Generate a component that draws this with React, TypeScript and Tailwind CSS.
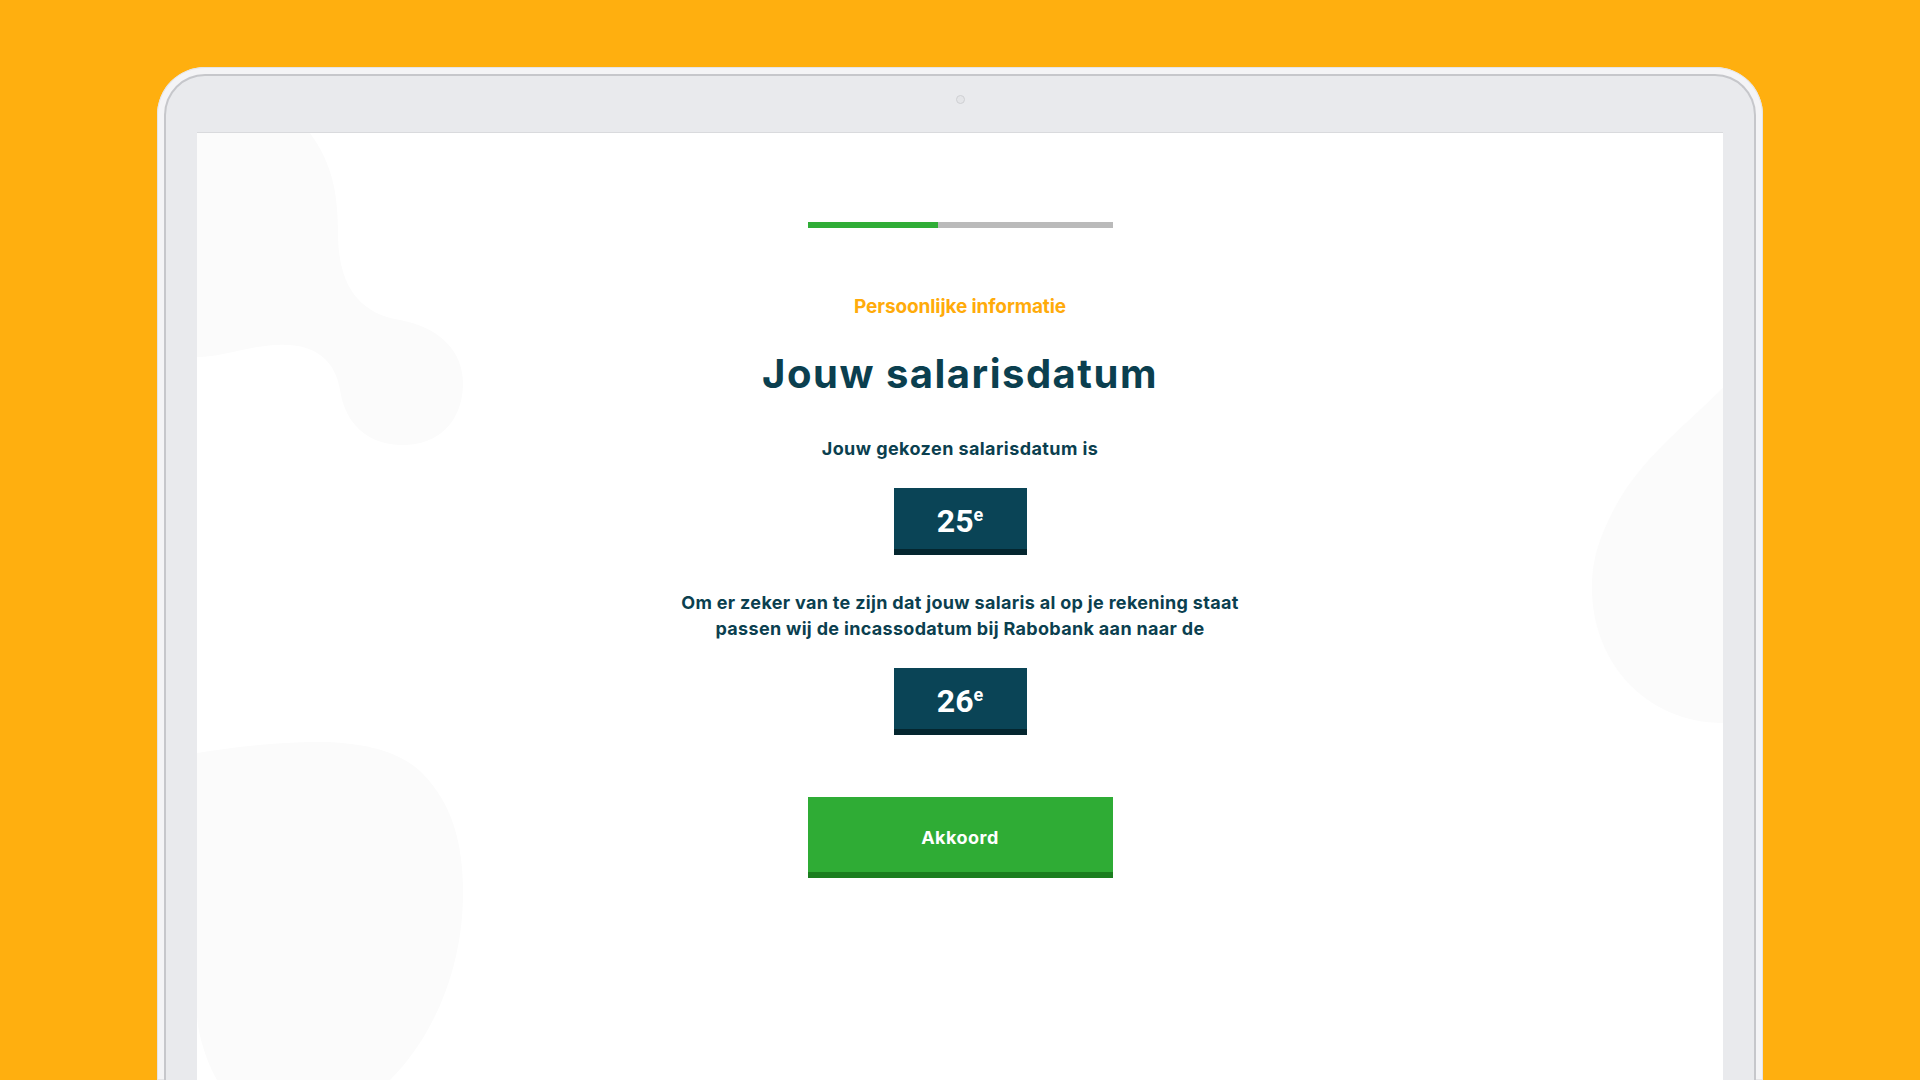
import React from "react";

function Blobs() {
  return (
    <svg
      className="absolute inset-0 h-full w-full"
      viewBox="0 0 1526 947"
      preserveAspectRatio="none"
      aria-hidden="true"
    >
      <path
        fill="#fbfbfb"
        d="M0,0 L113,0 C135,30 141,60 141,100 C141,150 160,180 203,187 C245,195 266,220 266,250 C266,290 240,312 206,312 C170,312 148,290 143,257 C138,225 115,210 80,212 C50,213 25,224 0,224 Z"
      />
      <path
        fill="#fbfbfb"
        d="M1526,255 C1480,300 1440,330 1415,380 C1400,410 1395,430 1395,455 C1395,530 1450,590 1526,590 Z"
      />
      <path
        fill="#fbfbfb"
        d="M0,620 C40,614 80,609 120,609 C170,609 205,620 225,640 C255,670 266,710 266,760 C266,830 240,900 193,947 L20,947 C10,930 0,900 0,880 Z"
      />
    </svg>
  );
}

function DateBox({ value }: { value: string }) {
  return (
    <div className="flex h-[67px] w-[133px] items-center justify-center border-b-[6px] border-[#04262f] bg-[#0a4456] pt-1">
      <div className="flex items-start text-white" style={{ fontFamily: "Roboto, 'Liberation Sans', sans-serif" }}>
        <span className="text-[32px] font-bold leading-none">{value}</span>
        <span className="mt-[1px] text-[18px] font-bold leading-none">e</span>
      </div>
    </div>
  );
}

export default function App() {
  return (
    <div
      className="h-screen w-full overflow-hidden bg-[#ffaf0f] px-[157px] pt-[67px]"
      style={{ fontFamily: "Inter, 'Noto Sans', sans-serif" }}
    >
      <div className="h-full rounded-t-[48px] bg-[#f4f4f6] px-[7px] pt-[7px] shadow-[inset_0_0_0_1px_#e4e4e7]">
        <div className="flex h-full flex-col rounded-t-[41px] border-x-2 border-t-2 border-[#c6c7cb] bg-[#e9eaed] px-[31px]">
          <div className="flex h-[56px] shrink-0 justify-center pt-[19px]">
            <div className="h-[9px] w-[9px] rounded-full border border-[#cfd0d3] bg-[#e4e5e8]" />
          </div>
          <div className="relative flex-1 overflow-hidden border-t border-[#d9dadd] bg-white">
            <Blobs />
            <div className="relative flex flex-col items-center pt-[89px] text-[#0b3f4f]">
              <div className="flex h-[6px] w-[305px]">
                <div className="h-full w-[130px] bg-[#30ad37]" />
                <div className="h-full flex-1 bg-[#bababa]" />
              </div>
              <div className="mt-[67px] text-[19px] font-bold leading-[24px] tracking-[-0.1px] text-[#ffab0a]">
                Persoonlijke informatie
              </div>
              <h1 className="mt-[31px] text-[40px] font-bold leading-[48px] tracking-[1.5px]">
                Jouw salarisdatum
              </h1>
              <p className="mt-[38px] text-[18px] font-bold leading-[26px] tracking-[0.42px]">
                Jouw gekozen salarisdatum is
              </p>
              <div className="mt-[26px]">
                <DateBox value="25" />
              </div>
              <p className="mt-[35px] text-center text-[18px] font-bold leading-[26px] tracking-[0.32px]">
                Om er zeker van te zijn dat jouw salaris al op je rekening staat
                <br />
                passen wij de incassodatum bij Rabobank aan naar de
              </p>
              <div className="mt-[26px]">
                <DateBox value="26" />
              </div>
              <button className="mt-[62px] flex h-[81px] w-[305px] items-center justify-center border-b-[6px] border-[#1b7e1f] bg-[#2fac35] pt-[6px] text-[18px] font-bold tracking-[0.5px] text-white">
                Akkoord
              </button>
            </div>
          </div>
        </div>
      </div>
    </div>
  );
}
